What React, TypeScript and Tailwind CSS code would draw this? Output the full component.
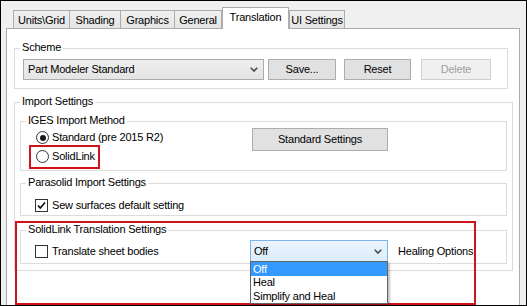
import React from 'react';

const Chevron = () => (
  <svg width="8" height="5" viewBox="0 0 8 5" className="shrink-0">
    <path d="M0.7 0.7 L4 4 L7.3 0.7" stroke="#4a4a4a" strokeWidth="1.6" fill="none" />
  </svg>
);

const GroupBox = ({ label, className = '', children }: { label: string; className?: string; children?: React.ReactNode }) => (
  <div className={`relative border border-[#dcdcdc] ${className}`}>
    <span className="absolute left-[5px] top-[-9px] bg-white px-[2px] leading-[14px] whitespace-nowrap">{label}</span>
    {children}
  </div>
);

const Button = ({ label, className = '', disabled = false }: { label: string; className?: string; disabled?: boolean }) => (
  <div
    className={`flex items-center justify-center border ${
      disabled ? 'border-[#cfcfcf] bg-[#f0f0f0] text-[#a0a0a0]' : 'border-[#adadad] bg-[#e1e1e1]'
    } ${className}`}
  >
    {label}
  </div>
);

const Radio = ({ checked = false }: { checked?: boolean }) => (
  <div className="flex h-[13px] w-[13px] items-center justify-center rounded-full border border-[#333] bg-white">
    {checked && <div className="h-[6px] w-[6px] rounded-full bg-[#1a1a1a]" />}
  </div>
);

const Checkbox = ({ checked = false }: { checked?: boolean }) => (
  <div className="flex h-[13px] w-[13px] shrink-0 items-center justify-center border border-[#333] bg-white">
    {checked && (
      <svg width="11" height="11" viewBox="0 0 11 11">
        <path d="M2 5.5 L4.3 8 L9 2.5" stroke="#111" strokeWidth="1.7" fill="none" />
      </svg>
    )}
  </div>
);

const tabs = [
  { label: 'Units\\Grid', w: 'w-[56px]' },
  { label: 'Shading', w: 'w-[51px]' },
  { label: 'Graphics', w: 'w-[54px]' },
  { label: 'General', w: 'w-[48px] border-r' },
];

export default function App() {
  return (
    <div className="relative h-[306px] w-[527px] overflow-hidden border border-black bg-[#f0f0f0] font-['Liberation_Sans',Arial,sans-serif] text-[11px] tracking-[-0.2px] text-black">
      {/* tab strip */}
      <div className="flex h-[27px] items-end pl-[12px]">
        {tabs.map((t) => (
          <div
            key={t.label}
            className={`flex h-[18px] items-center justify-center border-l border-t border-[#acacac] bg-gradient-to-b from-[#f0f0f0] to-[#e5e5e5] pt-[2px] ${t.w}`}
          >
            {t.label}
          </div>
        ))}
        <div className="relative z-10 mb-[-1px] flex h-[22px] w-[67px] items-center justify-center border-x border-t border-[#acacac] bg-white pb-[2px]">
          Translation
        </div>
        <div className="flex h-[18px] w-[56px] items-center justify-center border-x border-t border-[#acacac] bg-gradient-to-b from-[#f0f0f0] to-[#e5e5e5] pt-[2px]">
          UI Settings
        </div>
      </div>

      {/* tab page */}
      <div className="ml-[5px] h-[300px] w-[514px] border border-[#acacac] bg-white pl-[7px] pt-[19px]">
        <GroupBox label="Scheme" className="flex w-[494px] items-center pb-[8px] pl-[8px] pt-[10px]">
          <div className="flex h-[21px] w-[241px] items-center justify-between border border-[#acacac] bg-gradient-to-b from-[#efefef] to-[#e4e4e4] pl-[4px] pr-[5px]">
            <span>Part Modeler Standard</span>
            <Chevron />
          </div>
          <Button label="Save..." className="ml-[4px] h-[21px] w-[68px]" />
          <Button label="Reset" className="ml-[8px] h-[21px] w-[67px]" />
          <Button label="Delete" disabled className="ml-[10px] h-[21px] w-[70px]" />
        </GroupBox>

        <GroupBox label="Import Settings" className="mt-[13px] w-[499px] pb-[6px] pl-[5px] pt-[18px]">
          <GroupBox label="IGES Import Method" className="flex w-[487px] pb-[4px] pt-[6px]">
            <div className="flex w-[231px] flex-col pl-[15px]">
              <div className="flex h-[19px] items-center gap-[3px]">
                <Radio checked />
                <span>Standard (pre 2015 R2)</span>
              </div>
              <div className="flex h-[19px] items-center gap-[3px]">
                <Radio />
                <span>SolidLink</span>
              </div>
            </div>
            <Button label="Standard Settings" className="h-[23px] w-[136px]" />
          </GroupBox>

          <GroupBox label="Parasolid Import Settings" className="mt-[12px] w-[487px] pb-[3px] pl-[14px] pt-[15px]">
            <div className="flex h-[13px] items-center gap-[4px]">
              <Checkbox checked />
              <span>Sew surfaces default setting</span>
            </div>
          </GroupBox>

          <GroupBox label="SolidLink Translation Settings" className="mt-[14px] w-[487px] pb-[1px] pl-[14px] pt-[9px]">
            <div className="flex h-[22px] items-center">
              <div className="flex w-[215px] items-center gap-[4px]">
                <Checkbox />
                <span>Translate sheet bodies</span>
              </div>
              <div className="flex h-[22px] w-[138px] items-center justify-between border border-[#7eb4ea] bg-gradient-to-b from-[#ecf4fc] to-[#dcecfc] pl-[3px] pr-[5px]">
                <span>Off</span>
                <Chevron />
              </div>
              <span className="ml-[10px]">Healing Options</span>
            </div>
          </GroupBox>
        </GroupBox>
      </div>

      {/* open drop-down list */}
      <div className="absolute left-[249px] top-[260px] z-20 w-[138px] border border-[#646464] bg-white shadow-[2px_2px_2px_rgba(0,0,0,0.25)]">
        <div className="h-[14px] bg-[#3399ff] pl-[2px] leading-[14px] text-white">Off</div>
        <div className="h-[13px] pl-[2px] leading-[13px]">Heal</div>
        <div className="h-[14px] pl-[2px] leading-[14px]">Simplify and Heal</div>
      </div>

      {/* red annotation boxes */}
      <div className="pointer-events-none absolute left-[28px] top-[144px] h-[24px] w-[71px] border-2 border-[#d0121b]" />
      <div className="pointer-events-none absolute left-[14px] top-[220px] z-10 h-[84px] w-[461px] border-2 border-[#d0121b]" />
    </div>
  );
}
